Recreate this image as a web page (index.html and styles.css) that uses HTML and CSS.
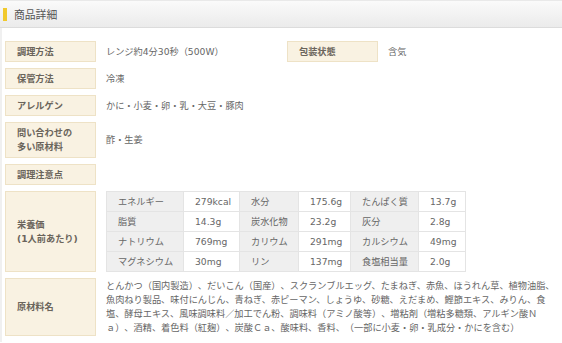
FILE: index.html
```html
<!DOCTYPE html>
<html lang="ja">
<head>
<meta charset="utf-8">
<title>商品詳細</title>
<link rel="stylesheet" href="styles.css">
</head>
<body>
<section class="detail">
  <h2 class="detail-title"><span class="title-mark"></span>商品詳細</h2>
  <div class="spec">
    <div class="spec-row">
      <div class="spec-label">調理方法</div>
      <div class="spec-value spec-value--half">レンジ約4分30秒（500W）</div>
      <div class="spec-label">包装状態</div>
      <div class="spec-value">含気</div>
    </div>
    <div class="spec-row">
      <div class="spec-label">保管方法</div>
      <div class="spec-value">冷凍</div>
    </div>
    <div class="spec-row">
      <div class="spec-label">アレルゲン</div>
      <div class="spec-value">かに・小麦・卵・乳・大豆・豚肉</div>
    </div>
    <div class="spec-row">
      <div class="spec-label spec-label--tall">問い合わせの<br>多い原材料</div>
      <div class="spec-value">酢・生姜</div>
    </div>
    <div class="spec-row">
      <div class="spec-label">調理注意点</div>
      <div class="spec-value"></div>
    </div>
    <div class="spec-row">
      <div class="spec-label">栄養価<br>(1人前あたり)</div>
      <div class="spec-value spec-value--table">
        <table class="nutrition">
          <colgroup>
            <col class="c1"><col class="c2"><col class="c3"><col class="c4"><col class="c5"><col class="c6">
          </colgroup>
          <tr><th>エネルギー</th><td>279kcal</td><th>水分</th><td>175.6g</td><th>たんぱく質</th><td>13.7g</td></tr>
          <tr><th>脂質</th><td>14.3g</td><th>炭水化物</th><td>23.2g</td><th>灰分</th><td>2.8g</td></tr>
          <tr><th>ナトリウム</th><td>769mg</td><th>カリウム</th><td>291mg</td><th>カルシウム</th><td>49mg</td></tr>
          <tr><th>マグネシウム</th><td>30mg</td><th>リン</th><td>137mg</td><th>食塩相当量</th><td>2.0g</td></tr>
        </table>
      </div>
    </div>
    <div class="spec-row">
      <div class="spec-label">原材料名</div>
      <div class="spec-value spec-value--text">とんかつ（国内製造）、だいこん（国産）、スクランブルエッグ、たまねぎ、赤魚、ほうれん草、植物油脂、魚肉ねり製品、味付にんじん、青ねぎ、赤ピーマン、しょうゆ、砂糖、えだまめ、鰹節エキス、みりん、食塩、酵母エキス、風味調味料／加工でん粉、調味料（アミノ酸等）、増粘剤（増粘多糖類、アルギン酸Ｎａ）、酒精、着色料（紅麹）、炭酸Ｃａ、酸味料、香料、（一部に小麦・卵・乳成分・かにを含む）</div>
    </div>
  </div>
</section>
</body>
</html>
```

FILE: styles.css
```css
html, body {
  margin: 0;
  padding: 0;
  background: #fff;
}

body {
  font-family: "DejaVu Sans", "Noto Sans CJK JP", sans-serif;
  font-size: 9.2px;
  color: #666;
  text-spacing-trim: space-all;
}

.detail-title {
  display: flex;
  align-items: center;
  gap: 7px;
  height: 26px;
  margin: 0;
  padding: 0 0 0 3px;
  box-sizing: content-box;
  border-top: 1px solid #e9e9e9;
  border-bottom: 1px solid #dcdcdc;
  background: linear-gradient(#fafafa, #ebebeb);
  font-family: "Noto Sans CJK JP", sans-serif;
  font-size: 10.8px;
  font-weight: normal;
  color: #555;
}

.title-mark {
  width: 4px;
  height: 13px;
  background: #f1c92c;
}

.spec {
  display: flex;
  flex-direction: column;
  gap: 6px;
  padding: 13px 0 6px 3px;
  border-left: 2px solid #f0f0f0;
}

.spec-row {
  display: flex;
  align-items: stretch;
}

.spec-label {
  display: flex;
  align-items: center;
  flex: none;
  width: 91px;
  min-height: 21px;
  box-sizing: border-box;
  padding: 2px 11px;
  background: #f9f2e2;
  border: 1px solid #eee2c6;
  font-weight: bold;
  color: #6a645b;
  line-height: 14px;
}

.spec-label--tall {
  padding-top: 3px;
  padding-bottom: 3px;
}

.spec-value {
  display: flex;
  align-items: center;
  flex: 1;
  padding: 0 0 0 10px;
  line-height: 14px;
}

.spec-value--half {
  flex: none;
  width: 181px;
}

.spec-value--text {
  display: block;
  padding-top: 1px;
  padding-bottom: 1px;
  word-break: break-all;
}

.nutrition {
  border-collapse: collapse;
  table-layout: fixed;
  width: 359px;
}

.nutrition .c1 { width: 77px; }
.nutrition .c2 { width: 56px; }
.nutrition .c3 { width: 59px; }
.nutrition .c4 { width: 52px; }
.nutrition .c5 { width: 68px; }
.nutrition .c6 { width: 47px; }

.nutrition th,
.nutrition td {
  height: 19px;
  padding: 0 0 0 11px;
  border: 1px solid #e4e4e4;
  text-align: left;
  font-weight: normal;
  white-space: nowrap;
  color: #666;
}

.nutrition th {
  background: #efefef;
}

.nutrition td {
  background: #fff;
}
```
